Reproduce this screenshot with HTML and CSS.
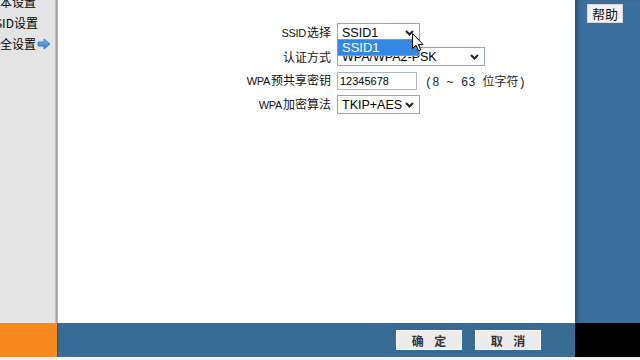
FILE: index.html
```html
<!DOCTYPE html>
<html lang="zh-CN">
<head>
    <meta charset="UTF-8">
    <title>无线安全设置</title>
    <link rel="stylesheet" href="styles.css">
</head>
<body>
    <div class="frame">
        <div class="top">
            <aside class="menu">
                <div class="menu-item">基本设置</div>
                <div class="menu-item">SSID设置</div>
                <div class="menu-item active">安全设置
                    <svg class="arrow" width="14" height="12" viewBox="0 0 14 12">
                        <defs>
                            <linearGradient id="ag" x1="0" y1="0" x2="0" y2="1">
                                <stop offset="0" stop-color="#7bb8f2"/>
                                <stop offset="1" stop-color="#2a78d6"/>
                            </linearGradient>
                        </defs>
                        <path d="M1 4 H7 V1 L13 6 L7 11 V8 H1 Z" fill="url(#ag)" stroke="#2d6fc0" stroke-width="0.8" stroke-linejoin="round"/>
                    </svg>
                </div>
            </aside>
            <div class="divider"></div>
            <main class="content">
                <div class="form">
                    <label class="label"><span class="latin">SSID</span>选择</label>
                    <div class="field open">
                        <div class="select w-short">
                            <span>SSID1</span>
                            <svg class="chev" width="9" height="6" viewBox="0 0 9 6"><path d="M1 1 L4.5 4.5 L8 1" fill="none" stroke="#222" stroke-width="2"/></svg>
                        </div>
                        <div class="dropdown">SSID1</div>
                        <svg class="cursor" width="12" height="19" viewBox="0 0 12 19">
                            <path d="M0.5 0.5 V15.5 L4 12.2 L6.6 18 L8.8 17 L6.3 11.4 H11 Z" fill="#fff" stroke="#000" stroke-width="1"/>
                        </svg>
                    </div>

                    <label class="label">认证方式</label>
                    <div class="field">
                        <div class="select w-long">
                            <span>WPA/WPA2-PSK</span>
                            <svg class="chev" width="9" height="6" viewBox="0 0 9 6"><path d="M1 1 L4.5 4.5 L8 1" fill="none" stroke="#222" stroke-width="2"/></svg>
                        </div>
                    </div>

                    <label class="label"><span class="latin">WPA</span>预共享密钥</label>
                    <div class="field">
                        <div class="input">12345678</div>
                        <span class="hint">(8 ~ 63 位字符)</span>
                    </div>

                    <label class="label"><span class="latin">WPA</span>加密算法</label>
                    <div class="field">
                        <div class="select w-short">
                            <span>TKIP+AES</span>
                            <svg class="chev" width="9" height="6" viewBox="0 0 9 6"><path d="M1 1 L4.5 4.5 L8 1" fill="none" stroke="#222" stroke-width="2"/></svg>
                        </div>
                    </div>
                </div>
            </main>
            <div class="help-panel">
                <button class="help-btn">帮助</button>
            </div>
        </div>
        <div class="bottom">
            <div class="bottom-left"></div>
            <div class="bottom-bar">
                <button class="btn">确 定</button>
                <button class="btn">取 消</button>
            </div>
            <div class="bottom-right"></div>
        </div>
    </div>
</body>
</html>
```

FILE: styles.css
```css
body {
    margin: 0;
    background: #f3f3f3;
    font-family: 'Liberation Sans', 'Noto Sans CJK SC', sans-serif;
    font-size: 12px;
    color: #000;
}
.frame {
    width: 640px;
    height: 360px;
    overflow: hidden;
}
.top {
    display: flex;
    height: 323px;
}
.menu {
    width: 55px;
    background: #e4e4e4;
    overflow: hidden;
}
.menu-item {
    display: flex;
    align-items: center;
    height: 21px;
    margin-left: -12px;
    white-space: nowrap;
    font-family: 'Noto Sans CJK SC', sans-serif;
    font-size: 12px;
}
.menu-item:first-child {
    margin-top: -9px;
}
.arrow {
    margin-left: 1px;
    margin-top: 1px;
}
.divider {
    width: 3px;
    background: linear-gradient(90deg, #cfcfcf 0%, #9d9d9d 50%, #c9c9c9 100%);
}
.content {
    width: 517px;
    background: #fff;
}
.form {
    display: grid;
    grid-template-columns: 273px auto;
    grid-auto-rows: 19px;
    column-gap: 6px;
    row-gap: 5px;
    padding-top: 23px;
}
.label {
    align-self: center;
    text-align: right;
    font-family: 'Noto Sans CJK SC', sans-serif;
    font-size: 12px;
    line-height: 19px;
    white-space: nowrap;
    color: #111;
}
.latin {
    font-family: 'Liberation Sans', sans-serif;
    font-size: 11px;
    letter-spacing: -0.3px;
    margin-right: 1px;
}
.field {
    position: relative;
    display: flex;
    align-items: center;
}
.field.open {
    z-index: 2;
}
.select, .input {
    box-sizing: border-box;
    height: 19px;
    border: 1px solid #8aa6c8;
    background: #fff;
    display: flex;
    align-items: center;
    padding-left: 4px;
    font-size: 12.5px;
}
.select {
    justify-content: space-between;
    padding-right: 5px;
}
.w-short { width: 83px; }
.w-long { width: 148px; }
.input {
    width: 80px;
    height: 18px;
    font-size: 11px;
    padding-left: 2px;
    border-color: #a9b6c6;
}
.hint {
    margin-left: 8px;
    font-family: 'Liberation Mono', 'Noto Sans CJK SC', monospace;
    font-size: 12px;
    color: #222;
}
.dropdown {
    position: absolute;
    left: 0;
    top: 16px;
    width: 83px;
    height: 17px;
    box-sizing: border-box;
    background: #3388e6;
    border: 1px solid #6aa0d8;
    color: #fff;
    font-size: 13px;
    line-height: 15px;
    padding-left: 4px;
}
.cursor {
    position: absolute;
    left: 75px;
    top: 10px;
}
.help-panel {
    width: 65px;
    background: #3d6f9d;
    box-shadow: inset 4px 0 4px -2px rgba(0, 0, 0, 0.35);
    padding-top: 4px;
}
.help-btn {
    display: block;
    margin-left: 12px;
    width: 36px;
    height: 19px;
    padding: 0;
    border: 1px solid #d8d8d8;
    background: #f2f2f2;
    font-family: 'Noto Sans CJK SC', sans-serif;
    font-size: 13px;
    line-height: 16px;
    color: #111;
}
.bottom {
    display: flex;
    height: 34px;
}
.bottom-left {
    width: 57px;
    background: #f7891f;
}
.bottom-bar {
    width: 518px;
    background: #386c94;
    box-shadow: inset 1px 0 0 #2d5577;
    display: flex;
    justify-content: flex-end;
    align-items: center;
    gap: 13px;
    padding-right: 34px;
    box-sizing: border-box;
}
.bottom-right {
    width: 65px;
    background: #000;
}
.btn {
    width: 66px;
    height: 20px;
    padding: 0;
    border: 1px solid #fafafa;
    background: #ececec;
    font-family: 'Noto Sans CJK SC', sans-serif;
    font-size: 12px;
    font-weight: bold;
    color: #333;
    letter-spacing: 4px;
    text-indent: 4px;
}
```
